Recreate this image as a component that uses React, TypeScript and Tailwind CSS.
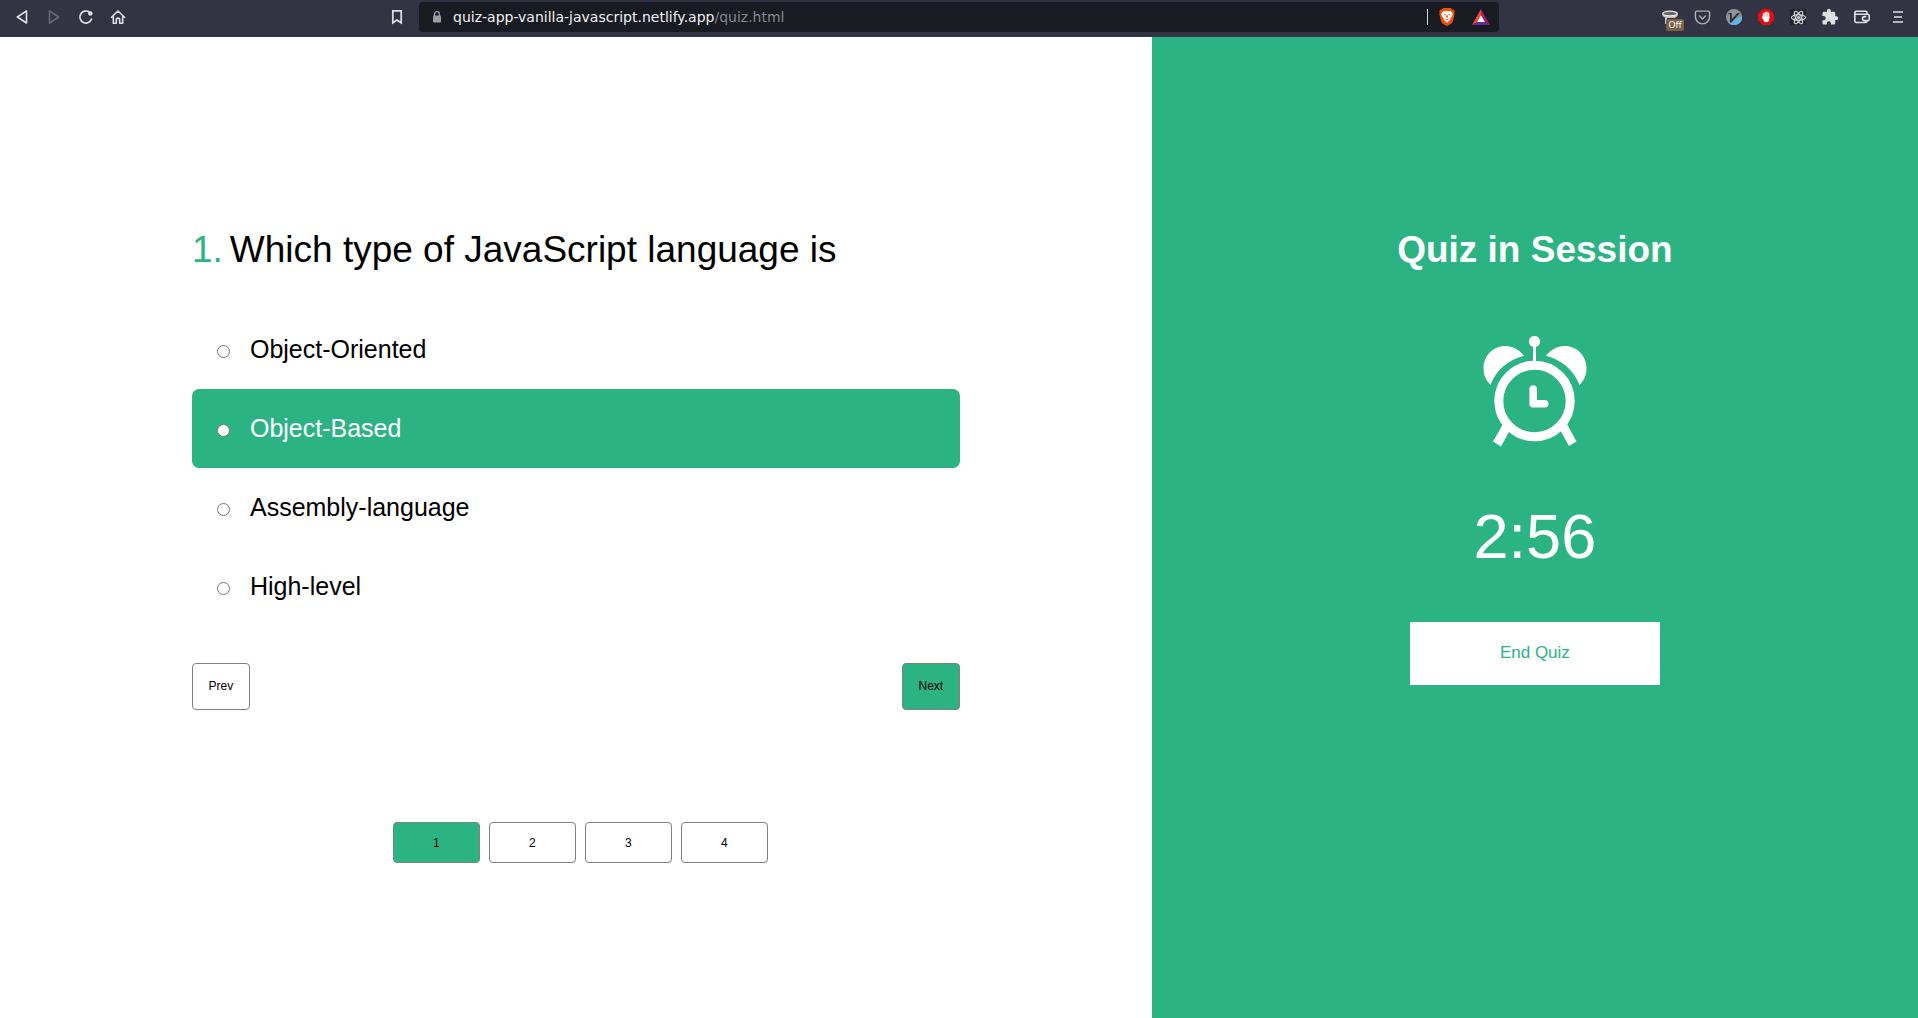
import { useState } from "react";
import type { ReactNode } from "react";
import { FiPocket } from "react-icons/fi";
import { FaReact } from "react-icons/fa";
import { MdExtension } from "react-icons/md";

function BarButton({ label, children }: { label: string; children: ReactNode }) {
  return (
    <button
      type="button"
      aria-label={label}
      className="relative flex h-8 w-8 shrink-0 items-center justify-center text-[#dfe0e4]"
    >
      {children}
    </button>
  );
}

function BraveLion() {
  return (
    <svg viewBox="0 0 16 18" width="16" height="18">
      <path d="M4.3 0h7.4l1.5 1.6 1.3-.2 1.3 2-.5 1.7.4 1.2-2 7.3c-.3 1-.8 1.6-1.6 2.2L8 18l-4.1-2.2c-.8-.6-1.3-1.2-1.6-2.2L.3 6.300l.4-1.200-.5-1.700 1.300-2 1.300.2z" fill="#f1500f" />
      <path d="M4.500 3l2 .2L8 2.800l1.500.4 2-.2 2.300 3-1 2.400-1.700 2 .3 1.200-1.700 1.300L8 14.800l-1.700-1.900-1.700-1.300.3-1.200-1.700-2-1-2.400z" fill="#fff" />
      <path d="M4.200 5.800l2.600.7-.9.900zM11.800 5.800l-2.600.7.9.9zM7.500 7h1l.4 2.300-.9.700-.9-.7zM6 10.500l2 .8 2-.8-.7 1L8 12.200l-1.300-.7z" fill="#f1500f" />
    </svg>
  );
}

function RewardsTriangle() {
  return (
    <svg viewBox="0 0 18 16" width="18" height="16">
      <path d="M9 0L0 16l5.200-3L9 6z" fill="#ff4724" />
      <path d="M9 0l9 16-5.200-3L9 6z" fill="#9e1f63" />
      <path d="M0 16h18l-5.200-3H5.200z" fill="#662d91" />
      <path d="M9 6l3.900 7H5.100z" fill="#fff" />
    </svg>
  );
}

function AlarmClock() {
  return (
    <svg viewBox="0 0 104 111" className="h-[111px] w-[104px]" fill="#fff" role="img" aria-label="Alarm clock">
      <circle cx="51.500" cy="5.500" r="5.600" />
      <rect x="50" y="8" width="3" height="20" />
      <circle cx="51.500" cy="65" r="35.700" fill="none" stroke="#fff" strokeWidth="9" />
      <path d="M7.500 49A22.500 22.500 0 0 1 .5 32C.5 20 10 10 22.500 10c7.500 0 14 4 18.500 9.800C26 23.500 13 34 7.500 49z" />
      <path d="M96.500 49a22.500 22.500 0 0 0 7-17C103.500 20 94 10 81.500 10c-7.500 0-14 4-18.500 9.800C78 23.500 90.500 34 96.500 49z" />
      <path d="M20 88l7 6-9 16.500-8-5zM84 88l-7 6 9 16 7.500-4.500z" />
      <path d="M50.200 53v14.800h11.500" fill="none" stroke="#fff" strokeWidth="7.600" strokeLinecap="round" strokeLinejoin="round" />
    </svg>
  );
}

function BrowserBar() {
  return (
    <header className="grid h-[37px] shrink-0 grid-cols-[1fr_minmax(0,1080px)_1fr] items-start bg-[#323443] font-['DejaVu_Sans',sans-serif]">
      <nav aria-label="Browser navigation" className="flex items-center px-1.5 pt-px">
        <BarButton label="Back">
          <svg width="16" height="16" viewBox="0 0 16 16" fill="none" stroke="currentColor" strokeWidth="1.600" strokeLinejoin="round">
            <path d="M12.500 2v12L3.300 8z" />
          </svg>
        </BarButton>
        <BarButton label="Forward">
          <svg width="16" height="16" viewBox="0 0 16 16" fill="none" stroke="#656775" strokeWidth="1.600" strokeLinejoin="round">
            <path d="M3.500 2v12l9.200-6z" />
          </svg>
        </BarButton>
        <BarButton label="Reload">
          <svg width="16" height="16" viewBox="0 0 16 16" fill="none" stroke="currentColor" strokeWidth="1.700" strokeLinecap="round">
            <path d="M13.600 10A6 6 0 1 1 11.500 3.200" />
            <circle cx="12.300" cy="4.500" r="2.300" fill="currentColor" stroke="none" />
          </svg>
        </BarButton>
        <BarButton label="Home">
          <svg width="16" height="16" viewBox="0 0 16 16" fill="none" stroke="currentColor" strokeWidth="1.600" strokeLinejoin="round" strokeLinecap="round">
            <path d="M1.500 8.300L8 2l6.500 6.300M3.300 7.500v6.700h3v-3.400a1.700 1.700 0 0 1 3.400 0v3.400h3V7.500" />
          </svg>
        </BarButton>
        <div className="flex-1" />
        <BarButton label="Bookmark this page">
          <svg width="16" height="16" viewBox="0 0 16 16" fill="none" stroke="currentColor" strokeWidth="1.700">
            <path d="M3.800 1.800h8.400v12L8 11l-4.200 2.800z" />
          </svg>
        </BarButton>
      </nav>

      <div className="mt-0.5 flex h-[30px] items-center rounded-[4px] bg-[#191b23] pr-[9px]">
        <svg width="10" height="12" viewBox="0 0 10 12" className="mr-[11px] ml-[13px]">
          <path d="M2.500 5V3.200a2.500 2.500 0 0 1 5 0V5" fill="none" stroke="#9b9da7" strokeWidth="1.200" />
          <rect x="1" y="4.500" width="8" height="7" rx="1" fill="#9b9da7" />
        </svg>
        <p className="flex-1 text-[14px] leading-5 whitespace-nowrap text-[#f2f2f3]">
          quiz-app-vanilla-javascript.netlify.app<span className="text-[#85868c]">/quiz.html</span>
        </p>
        <div className="mr-[11px] h-4 w-px bg-[#d8d8dc]" />
        <button type="button" aria-label="Shields" className="mr-[17px]"><BraveLion /></button>
        <button type="button" aria-label="Rewards"><RewardsTriangle /></button>
      </div>

      <nav aria-label="Extensions" className="flex items-center justify-end pt-px pr-1">
        <BarButton label="Page tool, off">
          <svg width="16" height="16" viewBox="0 0 16 16">
            <path d="M.5 4v3l2.500 1.500V15h2V9h8l2.500-2V4z" fill="#c4c4c6" />
            <ellipse cx="8" cy="4.500" rx="7.200" ry="2.300" fill="#666" stroke="#ececec" strokeWidth="1.300" />
          </svg>
          <span className="absolute top-[18px] left-3 flex h-3 w-[18px] items-center justify-center rounded-[2px] bg-[#7b6144] font-['Noto_Sans',sans-serif] text-[9px] leading-3 text-white">Off</span>
        </BarButton>
        <BarButton label="Pocket"><FiPocket size={17} color="#b0b1b8" /></BarButton>
        <BarButton label="Vimium">
          <svg width="16" height="16" viewBox="0 0 16 16">
            <circle cx="8" cy="8" r="8" fill="#8f9297" />
            <path d="M16 7a8 8 0 0 1-13.500 6.800z" fill="#66b1e6" />
            <path d="M2.500 4h3.300v6L11.500 4H14L5.500 13.500H4V5.300H2.500z" fill="#2b3137" />
          </svg>
        </BarButton>
        <BarButton label="Ad blocker">
          <svg width="16" height="16" viewBox="0 0 16 16">
            <path d="M4.700 0h6.600L16 4.700v6.600L11.300 16H4.700L0 11.300V4.700z" fill="#e30c10" />
            <path d="M5.500 8.500V4.800M7.200 8V3.500M8.900 8V3.300M10.600 8.500V4.300M4.500 8.300l1.800 2.400" stroke="#fff" strokeWidth="1.400" strokeLinecap="round" />
            <path d="M5 7.500h6.300v2.300c0 2-1.100 3.500-2.900 3.500-1.500 0-2.400-.8-2.900-2z" fill="#fff" />
          </svg>
        </BarButton>
        <BarButton label="React tools">
          <span className="flex h-4 w-4 items-center justify-center bg-[#23252f]">
            <FaReact size={15} stroke="currentColor" strokeWidth={16} />
          </span>
        </BarButton>
        <BarButton label="Extensions"><MdExtension size={18} /></BarButton>
        <BarButton label="Wallet">
          <svg width="16" height="16" viewBox="0 0 16 16" fill="none" stroke="currentColor" strokeWidth="1.600" strokeLinejoin="round">
            <path d="M13 5.300V3.300c0-.7-.4-1.100-1.100-1.100H2.200C1.300 2.200.8 2.700.8 3.400v8.500c0 1 .6 1.600 1.600 1.600h9c1 0 1.600-.5 1.600-1.400v-.4M.8 4.300c.3.700.8 1 1.600 1h11.200c1 0 1.600.6 1.600 1.500v3.400c0 .9-.5 1.400-1.400 1.400h-3.300a2 2 0 0 1 0-4h1.800" />
          </svg>
        </BarButton>
        <div className="ml-1">
          <BarButton label="Menu">
            <svg width="16" height="16" viewBox="0 0 16 16" stroke="currentColor" strokeWidth="1.600">
              <path d="M3 3h10M4 8h8M3 13h10" />
            </svg>
          </BarButton>
        </div>
      </nav>
    </header>
  );
}

const options = ["Object-Oriented", "Object-Based", "Assembly-language", "High-level"];
const pages = [1, 2, 3, 4];

export default function App() {
  const [answer, setAnswer] = useState("Object-Based");
  const [page, setPage] = useState(1);

  return (
    <div className="flex min-h-screen flex-col bg-white font-['Liberation_Sans',sans-serif] text-black">
      <BrowserBar />
      <div className="grid flex-1 grid-cols-[calc(60%+1px)_1fr]">
        <main className="px-[calc(100%/6)] pt-[191px]">
          <h1 className="text-[37px] leading-[44px]">
            <span className="mr-[7px] text-[#2bb384]">1.</span>Which type of JavaScript language is
          </h1>
          <fieldset aria-label="Answers" className="mt-[38px]">
            {options.map((option) => (
              <label
                key={option}
                className="flex h-[79px] cursor-pointer items-center rounded-[7px] pl-[25px] text-[25px] leading-7 has-checked:bg-[#2bb384] has-checked:text-white"
              >
                <input
                  type="radio"
                  name="answer"
                  checked={answer === option}
                  onChange={() => setAnswer(option)}
                  className="mt-1 mr-5 h-[13px] w-[13px] appearance-none rounded-full border border-[#767676] bg-white"
                />
                <span className="pb-0.5">{option}</span>
              </label>
            ))}
          </fieldset>
          <div className="mt-[37px] flex justify-between text-[12px]">
            <button type="button" className="h-[47px] w-[58px] rounded-[4px] border border-[#808080] bg-white pb-0.5">Prev</button>
            <button type="button" className="h-[47px] w-[58px] rounded-[4px] border border-[#808080] bg-[#2bb384] pb-0.5">Next</button>
          </div>
          <div className="mt-28 flex justify-center gap-[9px] pl-[9px] text-[12px]">
            {pages.map((n) => (
              <button
                key={n}
                type="button"
                aria-pressed={page === n}
                onClick={() => setPage(n)}
                className="h-[41px] w-[87px] rounded-[4px] border border-[#808080] bg-white aria-pressed:bg-[#2bb384]"
              >
                {n}
              </button>
            ))}
          </div>
        </main>

        <aside className="flex flex-col items-center bg-[#2bb384] pt-[191px] text-white">
          <h2 className="text-[37px] leading-[44px] font-bold">Quiz in Session</h2>
          <div className="mt-16"><AlarmClock /></div>
          <p className="mt-[53px] text-[63px] leading-[72px]">2:56</p>
          <button type="button" className="mt-[50px] h-[63px] w-[250px] bg-white pb-0.5 text-[17px] text-[#2bb384]">End Quiz</button>
        </aside>
      </div>
    </div>
  );
}
